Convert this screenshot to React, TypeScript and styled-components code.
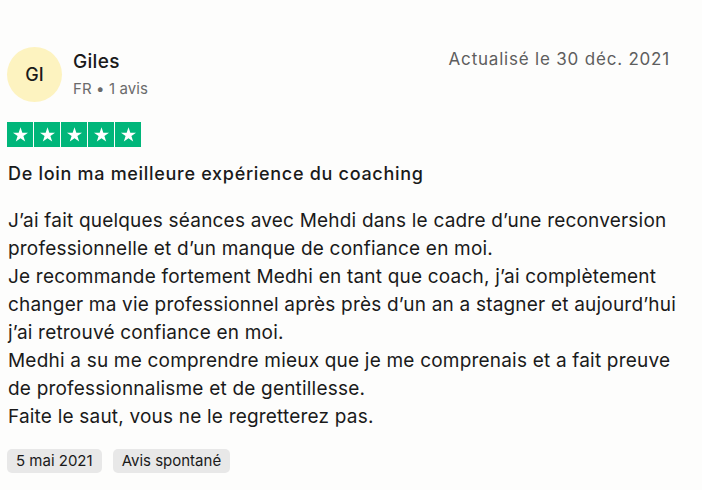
import React from 'react'
import styled, { createGlobalStyle } from 'styled-components'

const GlobalStyle = createGlobalStyle`
  body {
    margin: 0;
    background: #fdfdfc;
    font-family: Inter, "Liberation Sans", sans-serif;
    color: #1a1a1a;
  }
`

const Card = styled.article`
  width: 702px;
  height: 490px;
  box-sizing: border-box;
  padding: 47px 32px 0 7px;
`

const Header = styled.header`
  display: flex;
  align-items: flex-start;
  justify-content: space-between;
`

const Consumer = styled.div`
  display: flex;
  align-items: center;
  gap: 11px;
`

const Avatar = styled.div`
  width: 55px;
  height: 55px;
  border-radius: 50%;
  background: #fdf3c0;
  display: flex;
  align-items: center;
  justify-content: center;
  font-size: 18px;
  font-weight: 500;
  color: #1a1a1a;
`

const Name = styled.div`
  font-size: 19px;
  font-weight: 500;
  line-height: 24px;
  letter-spacing: 0.3px;
`

const Meta = styled.div`
  margin-top: 5px;
  font-size: 15px;
  line-height: 20px;
  color: #6b6b6b;
  letter-spacing: 0.1px;
`

const Updated = styled.time`
  margin-top: 2px;
  font-size: 17px;
  line-height: 20px;
  color: #5e5e5e;
  letter-spacing: 0.8px;
`

const Stars = styled.div`
  display: flex;
  gap: 1px;
  margin-top: 20px;
`

const StarBox = styled.span`
  width: 26px;
  height: 25px;
  background: #00b67a;
  display: flex;
  align-items: center;
  justify-content: center;
`

const Title = styled.h2`
  margin: 15px 0 0 1px;
  font-size: 18px;
  font-weight: 500;
  line-height: 24px;
  letter-spacing: 0.7px;
  color: #1a1a1a;
`

const Body = styled.p`
  width: 688px;
  margin: 21px 0 0 1px;
  font-size: 19px;
  line-height: 28px;
  letter-spacing: 0.2px;
  color: #1a1a1a;
`

const Tags = styled.div`
  display: flex;
  gap: 11px;
  margin-top: 18px;
`

const Tag = styled.span`
  background: #e8e8e8;
  border-radius: 5px;
  padding: 3px 9px;
  font-size: 15px;
  line-height: 18px;
  color: #1a1a1a;
`

const Star = () => (
  <svg width="17" height="17" viewBox="0 0 24 24">
    <path
      fill="#fff"
      d="M12 1.8l2.6 7.6h8l-6.5 4.8 2.5 7.8L12 17.2 5.4 22l2.5-7.8L1.4 9.4h8z"
    />
  </svg>
)

export default function App() {
  return (
    <>
      <GlobalStyle />
      <Card>
        <Header>
          <Consumer>
            <Avatar>GI</Avatar>
            <div>
              <Name>Giles</Name>
              <Meta>FR • 1 avis</Meta>
            </div>
          </Consumer>
          <Updated>Actualisé le 30 déc. 2021</Updated>
        </Header>
        <Stars>
          {[0, 1, 2, 3, 4].map((i) => (
            <StarBox key={i}>
              <Star />
            </StarBox>
          ))}
        </Stars>
        <Title>De loin ma meilleure expérience du coaching</Title>
        <Body>
          J’ai fait quelques séances avec Mehdi dans le cadre d’une reconversion
          professionnelle et d’un manque de confiance en moi.
          <br />
          Je recommande fortement Medhi en tant que coach, j’ai complètement
          changer ma vie professionnel après près d’un an a stagner et aujourd’hui
          j’ai retrouvé confiance en moi.
          <br />
          Medhi a su me comprendre mieux que je me comprenais et a fait preuve de
          professionnalisme et de gentillesse.
          <br />
          Faite le saut, vous ne le regretterez pas.
        </Body>
        <Tags>
          <Tag>5 mai 2021</Tag>
          <Tag>Avis spontané</Tag>
        </Tags>
      </Card>
    </>
  )
}
